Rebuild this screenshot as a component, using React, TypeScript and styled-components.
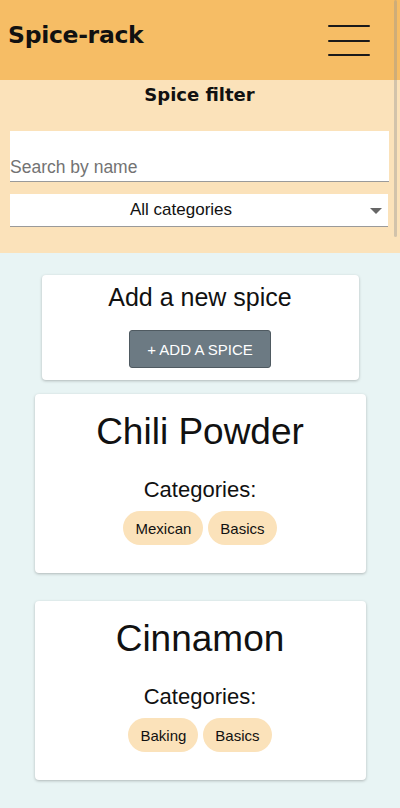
import styled, { createGlobalStyle } from "styled-components";

const GlobalStyle = createGlobalStyle`
  body {
    margin: 0;
    background-color: #e8f4f4;
    font-family: "Liberation Sans", Arial, sans-serif;
    color: #111;
  }
`;

/* Top area */
const Top = styled.div`
  position: relative;
`;

const Header = styled.header`
  display: flex;
  justify-content: space-between;
  align-items: flex-start;
  height: 80px;
  box-sizing: border-box;
  padding: 20px 30px 0 8px;
  background-color: #f6bd65;
`;

const Logo = styled.h1`
  margin: 0;
  font-family: "DejaVu Sans", Verdana, sans-serif;
  font-weight: 700;
  font-size: 23.5px;
  letter-spacing: -0.3px;
  line-height: 30px;
  color: #111;
`;

const MenuButton = styled.button`
  display: flex;
  flex-direction: column;
  gap: 12.5px;
  width: 42px;
  padding: 5px 0 0;
  border: none;
  background: transparent;
  cursor: pointer;
`;

const MenuLine = styled.span`
  display: block;
  height: 2px;
  width: 100%;
  background-color: #1a1a1a;
  border-radius: 1px;
`;

const Scrollbar = styled.div`
  position: absolute;
  top: 0;
  right: 3px;
  width: 3px;
  height: 237px;
  border-radius: 2px;
  background-color: rgba(150, 150, 150, 0.4);
`;

const FilterPanel = styled.section`
  display: flex;
  flex-direction: column;
  padding: 0 11px 26px 10px;
  background-color: #fbe2ba;
`;

const FilterTitle = styled.h2`
  margin: 0;
  padding: 3px 0 0;
  text-align: center;
  font-family: "DejaVu Sans", Verdana, sans-serif;
  font-weight: 700;
  font-size: 18px;
  line-height: 24px;
`;

const SearchInput = styled.input`
  margin-top: 24px;
  height: 51px;
  box-sizing: border-box;
  padding: 22px 0 0;
  border: none;
  border-bottom: 1px solid #9a9a9a;
  background-color: #fff;
  font-family: "Liberation Sans", Arial, sans-serif;
  font-size: 17.5px;
  outline: none;
  &::placeholder {
    color: #737373;
  }
`;

const SelectBox = styled.div`
  position: relative;
  display: flex;
  justify-content: center;
  align-items: center;
  height: 33px;
  margin-top: 12px;
  margin-right: 1px;
  padding-right: 36px;
  box-sizing: border-box;
  border-bottom: 1px solid #9a9a9a;
  background-color: #fff;
  font-size: 17px;
  color: #111;
`;

const Caret = styled.span`
  position: absolute;
  right: 6px;
  top: 14px;
  width: 0;
  height: 0;
  border-left: 6px solid transparent;
  border-right: 6px solid transparent;
  border-top: 6px solid #666;
`;

/* Spice list */
const Main = styled.main`
  display: flex;
  flex-direction: column;
  align-items: center;
  padding: 22px 0 28px;
`;

type CardProps = { $width: number; $gapAfter: number };

const Card = styled.div<CardProps>`
  display: flex;
  flex-direction: column;
  align-items: center;
  width: ${({ $width }) => $width}px;
  margin-bottom: ${({ $gapAfter }) => $gapAfter}px;
  background-color: #fff;
  border-radius: 4px;
  box-shadow: 0 1px 3px rgba(0, 0, 0, 0.25);
`;

const AddTitle = styled.h3`
  margin: 8px 0 0;
  font-weight: 400;
  font-size: 25px;
  line-height: 28px;
`;

const AddButton = styled.button`
  margin: 19px 0 12px;
  height: 38px;
  padding: 0 17px;
  border: 1px solid #4f5a61;
  border-radius: 3px;
  background-color: #6c7a83;
  color: #fff;
  font-family: "Liberation Sans", Arial, sans-serif;
  font-size: 15px;
  cursor: pointer;
`;

const SpiceName = styled.h2`
  margin: 16px 0 0;
  font-weight: 400;
  font-size: 37px;
  line-height: 44px;
`;

const CategoriesLabel = styled.h4`
  margin: 23px 0 0;
  font-weight: 400;
  font-size: 22px;
  line-height: 26px;
`;

const ChipRow = styled.div`
  display: flex;
  gap: 5px;
  margin: 8px 0 28px;
`;

const Chip = styled.span`
  display: flex;
  align-items: center;
  height: 34px;
  padding: 0 12px;
  border-radius: 17px;
  background-color: #fbe2ba;
  font-size: 15px;
`;

const spices = [
  { name: "Chili Powder", categories: ["Mexican", "Basics"] },
  { name: "Cinnamon", categories: ["Baking", "Basics"] },
];

export default function App() {
  return (
    <>
      <GlobalStyle />
      <Top>
        <Header>
          <Logo>Spice-rack</Logo>
          <MenuButton aria-label="menu">
            <MenuLine />
            <MenuLine />
            <MenuLine />
          </MenuButton>
        </Header>
        <FilterPanel>
          <FilterTitle>Spice filter</FilterTitle>
          <SearchInput placeholder="Search by name" />
          <SelectBox>
            All categories
            <Caret />
          </SelectBox>
        </FilterPanel>
        <Scrollbar />
      </Top>
      <Main>
        <Card $width={317} $gapAfter={14}>
          <AddTitle>Add a new spice</AddTitle>
          <AddButton>+ ADD A SPICE</AddButton>
        </Card>
        {spices.map((spice) => (
          <Card key={spice.name} $width={331} $gapAfter={28}>
            <SpiceName>{spice.name}</SpiceName>
            <CategoriesLabel>Categories:</CategoriesLabel>
            <ChipRow>
              {spice.categories.map((c) => (
                <Chip key={c}>{c}</Chip>
              ))}
            </ChipRow>
          </Card>
        ))}
      </Main>
    </>
  );
}
